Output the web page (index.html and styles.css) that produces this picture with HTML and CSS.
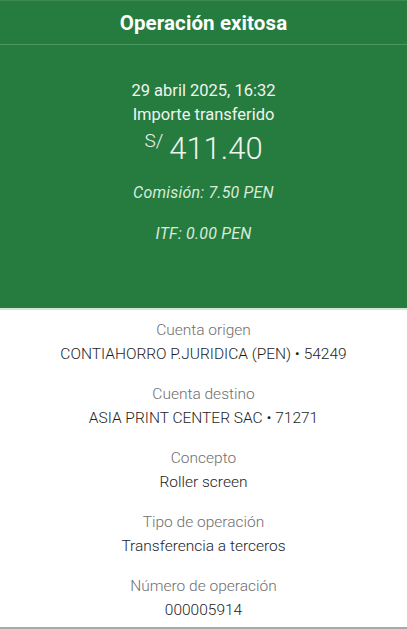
FILE: index.html
```html
<!DOCTYPE html>
<html lang="es">
<head>
<meta charset="utf-8">
<title>Operación exitosa</title>
<link rel="stylesheet" href="styles.css">
</head>
<body>
<div class="page">
  <header class="topbar">
    <h1 class="title">Operación exitosa</h1>
  </header>
  <section class="hero">
    <div class="date">29 abril 2025, 16:32</div>
    <div class="caption">Importe transferido</div>
    <div class="amount"><span class="currency">S/</span><span class="value">411.40</span></div>
    <div class="fee">Comisión: 7.50 PEN</div>
    <div class="fee itf">ITF: 0.00 PEN</div>
  </section>
  <section class="details">
    <div class="item">
      <div class="label">Cuenta origen</div>
      <div class="data">CONTIAHORRO P.JURIDICA (PEN) • 54249</div>
    </div>
    <div class="item">
      <div class="label">Cuenta destino</div>
      <div class="data">ASIA PRINT CENTER SAC • 71271</div>
    </div>
    <div class="item">
      <div class="label">Concepto</div>
      <div class="data">Roller screen</div>
    </div>
    <div class="item">
      <div class="label">Tipo de operación</div>
      <div class="data">Transferencia a terceros</div>
    </div>
    <div class="item">
      <div class="label">Número de operación</div>
      <div class="data">000005914</div>
    </div>
  </section>
</div>
</body>
</html>
```
FILE: styles.css
```css
* { box-sizing: border-box; margin: 0; padding: 0; }
html, body { background: #ffffff; }
body { font-family: Roboto, "Noto Sans", "Liberation Sans", sans-serif; }
.page { width: 407px; height: 629px; display: flex; flex-direction: column; border-bottom: 2px solid #a9a9a9; }
.topbar { height: 45px; background: #267b3f; border-top: 1px solid #3b8a52; border-bottom: 1px solid #4a9560; display: flex; align-items: center; justify-content: center; }
.title { color: #ffffff; font-size: 20.5px; font-weight: 700; letter-spacing: 0.1px; }
.hero { height: 265px; background: #267b3f; border-bottom: 2px solid #cfe6d6; display: flex; flex-direction: column; align-items: center; padding-top: 36px; color: #eef5ef; }
.date { font-size: 16.5px; font-weight: 400; line-height: 20px; }
.caption { font-size: 16.5px; font-weight: 400; line-height: 20px; margin-top: 4px; }
.amount { display: flex; align-items: flex-start; margin-top: 6px; height: 40px; }
.currency { font-size: 19px; font-weight: 300; line-height: 20px; margin-right: 6px; margin-top: 0px; }
.value { font-size: 31px; font-weight: 300; line-height: 36px; }
.fee { font-size: 16px; font-style: italic; font-weight: 400; color: #d6ebd9; line-height: 20px; margin-top: 12px; letter-spacing: 0.2px; }
.itf { margin-top: 21px; }
.details { display: flex; flex-direction: column; align-items: center; padding-top: 10px; gap: 20px; }
.item { display: flex; flex-direction: column; align-items: center; gap: 4px; }
.label { font-size: 15.5px; font-weight: 300; color: #6f6f6f; line-height: 20px; }
.data { font-size: 15.5px; font-weight: 300; color: #1e1e1e; line-height: 20px; }
```
